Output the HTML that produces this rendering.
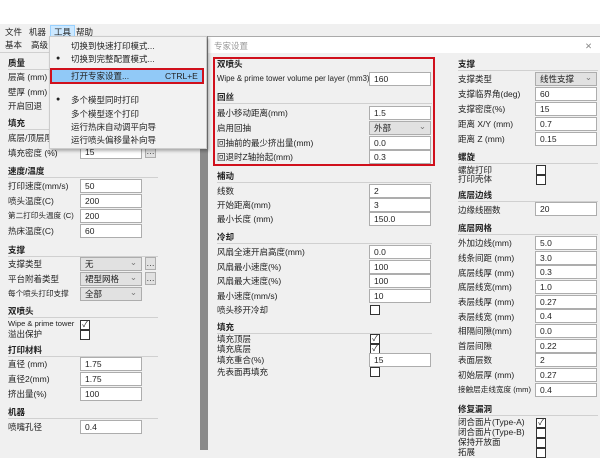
<!DOCTYPE html><html><head><meta charset="utf-8"><style>
*{margin:0;padding:0;box-sizing:border-box}
body{width:600px;height:450px;overflow:hidden;background:#f0f0f0;position:relative;font-family:"Liberation Sans","Noto Sans CJK SC",sans-serif;font-size:8.5px;color:#222}
div{position:absolute}
.l{white-space:nowrap;line-height:12px}
.h{white-space:nowrap;font-weight:bold;line-height:12px}
.hl{height:1px;background:#d0d0d0}
.i{height:14px;background:#fff;border:1px solid #adadad;padding-left:4px;line-height:12px}
.s{height:14px;background:#e1e1e1;border:1px solid #adadad;padding-left:4px;line-height:12px}
.s:after{content:"⌄";position:absolute;right:4px;top:-2px;color:#777}
.b{width:11px;height:13px;background:#e1e1e1;border:1px solid #adadad;text-align:center;line-height:10px}
.c{width:10px;height:10px;background:#fff;border:1px solid #333;font-size:8px;line-height:8px;text-align:center}
.sm{font-size:7.6px}
</style></head><body>
<div style="left:0;top:0;width:600px;height:24px;background:#fff"></div>
<div class="l" style="left:5px;top:26px">文件</div><div class="l" style="left:29px;top:26px">机器</div>
<div class="l" style="left:50px;top:25px;background:#cce8ff;border:1px solid #99d1ff;padding:0 3px">工具</div><div class="l" style="left:76px;top:26px">帮助</div>
<div class="l" style="left:5px;top:39px">基本</div><div class="l" style="left:31px;top:39px">高级</div>
<div class="hl" style="left:0;top:52px;width:200px"></div>
<div class="h" style="left:8px;top:57px">质量</div><div class="hl" style="left:8px;top:69px;width:150px"></div>
<div class="l" style="left:8px;top:71px">层高 (mm)</div>
<div class="l" style="left:8px;top:86px">壁厚 (mm)</div>
<div class="l" style="left:8px;top:100px">开启回退</div>
<div class="h" style="left:8px;top:117px">填充</div><div class="hl" style="left:8px;top:129px;width:150px"></div>
<div class="l" style="left:8px;top:132px">底层/顶层厚</div>
<div class="l" style="left:8px;top:147px">填充密度 (%)</div><div class="i" style="left:80px;top:145px;width:62px">15</div><div class="b" style="left:145px;top:145px">…</div>
<div class="h" style="left:8px;top:165px">速度/温度</div><div class="hl" style="left:8px;top:177px;width:150px"></div>
<div class="l" style="left:8px;top:180px">打印速度(mm/s)</div><div class="i" style="left:80px;top:179px;width:62px">50</div>
<div class="l" style="left:8px;top:195px">喷头温度(C)</div><div class="i" style="left:80px;top:194px;width:62px">200</div>
<div class="l sm" style="left:8px;top:210px">第二打印头温度 (C)</div><div class="i" style="left:80px;top:209px;width:62px">200</div>
<div class="l" style="left:8px;top:225px">热床温度(C)</div><div class="i" style="left:80px;top:224px;width:62px">60</div>
<div class="h" style="left:8px;top:244px">支撑</div><div class="hl" style="left:8px;top:256px;width:150px"></div>
<div class="l" style="left:8px;top:258px">支撑类型</div><div class="s" style="left:80px;top:257px;width:62px">无</div><div class="b" style="left:145px;top:257px">…</div>
<div class="l" style="left:8px;top:273px">平台附着类型</div><div class="s" style="left:80px;top:272px;width:62px">裙型网格</div><div class="b" style="left:145px;top:272px">…</div>
<div class="l sm" style="left:8px;top:288px">每个喷头打印支撑</div><div class="s" style="left:80px;top:287px;width:62px">全部</div>
<div class="h" style="left:8px;top:305px">双喷头</div><div class="hl" style="left:8px;top:317px;width:150px"></div>
<div class="l sm" style="left:8px;top:318px">Wipe &amp; prime tower</div><div class="c" style="left:80px;top:320px">✓</div>
<div class="l" style="left:8px;top:328px">溢出保护</div><div class="c" style="left:80px;top:330px"></div>
<div class="h" style="left:8px;top:344px">打印材料</div><div class="hl" style="left:8px;top:356px;width:150px"></div>
<div class="l" style="left:8px;top:358px">直径 (mm)</div><div class="i" style="left:80px;top:357px;width:62px">1.75</div>
<div class="l" style="left:8px;top:373px">直径2(mm)</div><div class="i" style="left:80px;top:372px;width:62px">1.75</div>
<div class="l" style="left:8px;top:388px">挤出量(%)</div><div class="i" style="left:80px;top:387px;width:62px">100</div>
<div class="h" style="left:8px;top:406px">机器</div><div class="hl" style="left:8px;top:418px;width:150px"></div>
<div class="l" style="left:8px;top:421px">喷嘴孔径</div><div class="i" style="left:80px;top:420px;width:62px">0.4</div>

<div style="left:200px;top:36px;width:8px;height:414px;background:#8a8a8a"></div>
<div style="left:208px;top:36px;width:392px;height:414px;background:#f0f0f0;border-top:1px solid #aaa"></div>
<div style="left:208px;top:37px;width:392px;height:16px;background:#fff"></div>
<div class="l" style="left:214px;top:40px;color:#999">专家设置</div>
<div class="l" style="left:585px;top:40px;color:#888">✕</div>

<div style="left:213px;top:57px;width:222px;height:109px;border:2px solid #d0101c"></div>
<div class="h" style="left:217px;top:58px">双喷头</div>
<div class="l" style="left:217px;top:73px;font-size:7.8px">Wipe &amp; prime tower volume per layer (mm3)</div><div class="i" style="left:369px;top:72px;width:62px">160</div>
<div class="h" style="left:217px;top:91px">回丝</div><div class="hl" style="left:217px;top:103px;width:215px"></div>
<div class="l" style="left:217px;top:107px">最小移动距离(mm)</div><div class="i" style="left:369px;top:106px;width:62px">1.5</div>
<div class="l" style="left:217px;top:122px">启用回抽</div><div class="s" style="left:369px;top:121px;width:62px">外部</div>
<div class="l" style="left:217px;top:137px">回抽前的最少挤出量(mm)</div><div class="i" style="left:369px;top:136px;width:62px">0.0</div>
<div class="l" style="left:217px;top:151px">回退时Z轴抬起(mm)</div><div class="i" style="left:369px;top:150px;width:62px">0.3</div>
<div class="h" style="left:217px;top:170px">補动</div><div class="hl" style="left:217px;top:182px;width:215px"></div>
<div class="l" style="left:217px;top:185px">线数</div><div class="i" style="left:369px;top:184px;width:62px">2</div>
<div class="l" style="left:217px;top:199px">开始距离(mm)</div><div class="i" style="left:369px;top:198px;width:62px">3</div>
<div class="l" style="left:217px;top:213px">最小长度 (mm)</div><div class="i" style="left:369px;top:212px;width:62px">150.0</div>
<div class="h" style="left:217px;top:231px">冷却</div><div class="hl" style="left:217px;top:243px;width:215px"></div>
<div class="l" style="left:217px;top:246px">风扇全速开启高度(mm)</div><div class="i" style="left:369px;top:245px;width:62px">0.0</div>
<div class="l" style="left:217px;top:261px">风扇最小速度(%)</div><div class="i" style="left:369px;top:260px;width:62px">100</div>
<div class="l" style="left:217px;top:275px">风扇最大速度(%)</div><div class="i" style="left:369px;top:274px;width:62px">100</div>
<div class="l" style="left:217px;top:290px">最小速度(mm/s)</div><div class="i" style="left:369px;top:289px;width:62px">10</div>
<div class="l" style="left:217px;top:304px">喷头移开冷却</div><div class="c" style="left:370px;top:305px"></div>
<div class="h" style="left:217px;top:321px">填充</div><div class="hl" style="left:217px;top:333px;width:215px"></div>
<div class="l" style="left:217px;top:333px">填充顶层</div><div class="c" style="left:370px;top:334px">✓</div>
<div class="l" style="left:217px;top:343px">填充底层</div><div class="c" style="left:370px;top:344px">✓</div>
<div class="l" style="left:217px;top:354px">填充重合(%)</div><div class="i" style="left:369px;top:353px;width:62px">15</div>
<div class="l" style="left:217px;top:366px">先表面再填充</div><div class="c" style="left:370px;top:367px"></div>

<div class="h" style="left:458px;top:58px">支撑</div><div class="hl" style="left:458px;top:70px;width:140px"></div>
<div class="l" style="left:458px;top:73px">支撑类型</div><div class="s" style="left:535px;top:72px;width:62px">线性支撑</div>
<div class="l" style="left:458px;top:88px">支撑临界角(deg)</div><div class="i" style="left:535px;top:87px;width:62px">60</div>
<div class="l" style="left:458px;top:103px">支撑密度(%)</div><div class="i" style="left:535px;top:102px;width:62px">15</div>
<div class="l" style="left:458px;top:118px">距离 X/Y (mm)</div><div class="i" style="left:535px;top:117px;width:62px">0.7</div>
<div class="l" style="left:458px;top:133px">距离 Z (mm)</div><div class="i" style="left:535px;top:132px;width:62px">0.15</div>
<div class="h" style="left:458px;top:151px">螺旋</div><div class="hl" style="left:458px;top:163px;width:140px"></div>
<div class="l" style="left:458px;top:164px">螺旋打印</div><div class="c" style="left:536px;top:165px"></div>
<div class="l" style="left:458px;top:173px">打印壳体</div><div class="c" style="left:536px;top:175px"></div>
<div class="h" style="left:458px;top:189px">底层边线</div><div class="hl" style="left:458px;top:201px;width:140px"></div>
<div class="l" style="left:458px;top:204px">边缘线圈数</div><div class="i" style="left:535px;top:202px;width:62px">20</div>
<div class="h" style="left:458px;top:222px">底层网格</div><div class="hl" style="left:458px;top:234px;width:140px"></div>
<div class="l" style="left:458px;top:237px">外加边线(mm)</div><div class="i" style="left:535px;top:236px;width:62px">5.0</div>
<div class="l" style="left:458px;top:252px">线条间距 (mm)</div><div class="i" style="left:535px;top:251px;width:62px">3.0</div>
<div class="l" style="left:458px;top:267px">底层线厚 (mm)</div><div class="i" style="left:535px;top:265px;width:62px">0.3</div>
<div class="l" style="left:458px;top:281px">底层线宽(mm)</div><div class="i" style="left:535px;top:280px;width:62px">1.0</div>
<div class="l" style="left:458px;top:296px">表层线厚 (mm)</div><div class="i" style="left:535px;top:295px;width:62px">0.27</div>
<div class="l" style="left:458px;top:311px">表层线宽 (mm)</div><div class="i" style="left:535px;top:309px;width:62px">0.4</div>
<div class="l" style="left:458px;top:325px">相隔间隙(mm)</div><div class="i" style="left:535px;top:324px;width:62px">0.0</div>
<div class="l" style="left:458px;top:340px">首层间隙</div><div class="i" style="left:535px;top:339px;width:62px">0.22</div>
<div class="l" style="left:458px;top:354px">表面层数</div><div class="i" style="left:535px;top:353px;width:62px">2</div>
<div class="l" style="left:458px;top:369px">初始层厚 (mm)</div><div class="i" style="left:535px;top:368px;width:62px">0.27</div>
<div class="l sm" style="left:458px;top:384px">接触层走线宽度 (mm)</div><div class="i" style="left:535px;top:383px;width:62px">0.4</div>
<div class="h" style="left:458px;top:403px">修复漏洞</div><div class="hl" style="left:458px;top:415px;width:140px"></div>
<div class="l" style="left:458px;top:416px">闭合面片(Type-A)</div><div class="c" style="left:536px;top:418px">✓</div>
<div class="l" style="left:458px;top:426px">闭合面片(Type-B)</div><div class="c" style="left:536px;top:428px"></div>
<div class="l" style="left:458px;top:436px">保持开放面</div><div class="c" style="left:536px;top:438px"></div>
<div class="l" style="left:458px;top:446px">拓展</div><div class="c" style="left:536px;top:448px"></div>

<div style="left:49px;top:36px;width:158px;height:113px;background:#f2f2f2;border:1px solid #ccc;box-shadow:2px 2px 3px rgba(0,0,0,.3)"></div>
<div class="l" style="left:71px;top:40px">切换到快速打印模式...</div>
<div class="l" style="left:56px;top:53px;font-size:7px">●</div><div class="l" style="left:71px;top:53px">切换到完整配置模式...</div>
<div style="left:50px;top:68px;width:154px;height:16px;background:#91c9f7;border:2px solid #d0101c"></div>
<div class="l" style="left:71px;top:70px">打开专家设置...</div><div class="l" style="left:165px;top:70px">CTRL+E</div>
<div class="l" style="left:56px;top:94px;font-size:7px">●</div><div class="l" style="left:71px;top:94px">多个模型同时打印</div>
<div class="l" style="left:71px;top:108px">多个模型逐个打印</div>
<div class="l" style="left:71px;top:121px">运行热床自动调平向导</div>
<div class="l" style="left:71px;top:134px">运行喷头偏移量补向导</div>
</body></html>
